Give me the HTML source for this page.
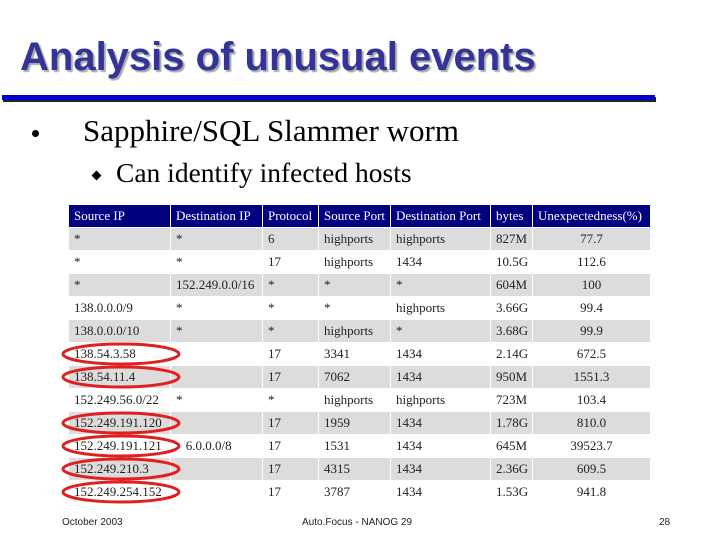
<!DOCTYPE html>
<html><head><style>
body{margin:0;width:720px;height:540px;background:#fff;position:relative;overflow:hidden;font-family:"Liberation Serif",serif}
.t{position:absolute;left:20px;top:37px;font:bold 40px/40px "Liberation Sans",sans-serif;color:#333399;text-shadow:2px 2px 1px #aaa;white-space:nowrap}
.ln{position:absolute;left:2px;top:95px;width:653px;height:5px;background:#0000cc;box-shadow:1px 2px 0 #222}
.b1{position:absolute;left:83px;top:113px;font-size:31px;white-space:nowrap}
.b2{position:absolute;left:116px;top:157px;font-size:27.5px;white-space:nowrap}
table{position:absolute;left:68px;top:204px;border-collapse:collapse;font-family:"Liberation Serif",serif;font-size:13px;color:#222}
td{height:23px;padding:0 0 0 5px;border:1px solid #fff;white-space:nowrap;box-sizing:border-box}
tr.h td{background:#000080;color:#fff}
tr.g td{background:#dcdcdc}
td.c{text-align:center;padding:0}
.f{position:absolute;top:517px;font:10px "Liberation Sans",sans-serif;color:#222}
</style></head><body>
<div class="t">Analysis of unusual events</div>
<div class="ln"></div>
<div style="position:absolute;left:32px;top:130px;width:7px;height:7px;border-radius:50%;background:#000"></div>
<div class="b1">Sapphire/SQL Slammer worm</div>
<div style="position:absolute;left:93px;top:172px;width:7px;height:7px;background:#000;transform:rotate(45deg)"></div>
<div class="b2">Can identify infected hosts</div>
<table>
<colgroup><col style="width:102px"><col style="width:92px"><col style="width:56px"><col style="width:72px"><col style="width:100px"><col style="width:42px"><col style="width:118px"></colgroup>
<tr class="h"><td>Source IP</td><td>Destination IP</td><td>Protocol</td><td>Source Port</td><td>Destination Port</td><td>bytes</td><td>Unexpectedness(%)</td></tr>
<tr class="g"><td>*</td><td>*</td><td>6</td><td>highports</td><td>highports</td><td>827M</td><td class="c">77.7</td></tr>
<tr><td>*</td><td>*</td><td>17</td><td>highports</td><td>1434</td><td>10.5G</td><td class="c">112.6</td></tr>
<tr class="g"><td>*</td><td>152.249.0.0/16</td><td>*</td><td>*</td><td>*</td><td>604M</td><td class="c">100</td></tr>
<tr><td>138.0.0.0/9</td><td>*</td><td>*</td><td>*</td><td>highports</td><td>3.66G</td><td class="c">99.4</td></tr>
<tr class="g"><td>138.0.0.0/10</td><td>*</td><td>*</td><td>highports</td><td>*</td><td>3.68G</td><td class="c">99.9</td></tr>
<tr><td>138.54.3.58</td><td></td><td>17</td><td>3341</td><td>1434</td><td>2.14G</td><td class="c">672.5</td></tr>
<tr class="g"><td>138.54.11.4</td><td></td><td>17</td><td>7062</td><td>1434</td><td>950M</td><td class="c">1551.3</td></tr>
<tr><td>152.249.56.0/22</td><td>*</td><td>*</td><td>highports</td><td>highports</td><td>723M</td><td class="c">103.4</td></tr>
<tr class="g"><td>152.249.191.120</td><td></td><td>17</td><td>1959</td><td>1434</td><td>1.78G</td><td class="c">810.0</td></tr>
<tr><td>152.249.191.121</td><td>&nbsp;&nbsp;&nbsp;6.0.0.0/8</td><td>17</td><td>1531</td><td>1434</td><td>645M</td><td class="c">39523.7</td></tr>
<tr class="g"><td>152.249.210.3</td><td></td><td>17</td><td>4315</td><td>1434</td><td>2.36G</td><td class="c">609.5</td></tr>
<tr><td>152.249.254.152</td><td></td><td>17</td><td>3787</td><td>1434</td><td>1.53G</td><td class="c">941.8</td></tr>
</table>
<svg style="position:absolute;left:0;top:0" width="720" height="540">
<g fill="none" stroke="#e02020" stroke-width="3">
<ellipse cx="121" cy="354" rx="58" ry="10"/>
<ellipse cx="121" cy="377" rx="58" ry="10"/>
<ellipse cx="121" cy="423" rx="58" ry="10"/>
<ellipse cx="121" cy="446" rx="58" ry="10"/>
<ellipse cx="121" cy="469" rx="58" ry="10"/>
<ellipse cx="121" cy="492" rx="58" ry="10"/>
</g></svg>
<div class="f" style="left:62px">October 2003</div>
<div class="f" style="left:302px">Auto.Focus - NANOG 29</div>
<div class="f" style="left:659px">28</div>
</body></html>
